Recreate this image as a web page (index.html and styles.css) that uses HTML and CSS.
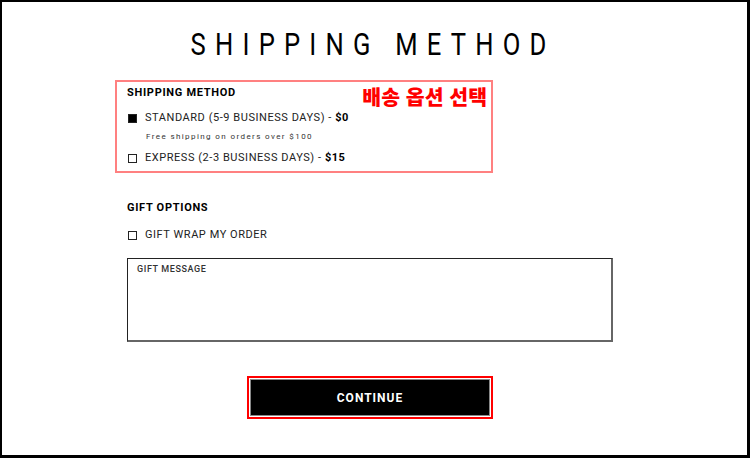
FILE: index.html
```html
<!DOCTYPE html>
<html lang="ko">

<head>
  <meta charset="UTF-8">
  <meta name="viewport" content="width=device-width, initial-scale=1.0">
  <title>Shipping Method</title>
  <link rel="stylesheet" href="styles.css">
</head>

<body>
  <div class="checkout">
    <h1 class="page-title"><span>SHIPPING METHOD</span></h1>

    <!-- shipping options, boxed with the annotation -->
    <div class="shipping-box">
      <span class="note">배송 옵션 선택</span>
      <h2 class="section-title">SHIPPING METHOD</h2>
      <div class="option">
        <span class="check checked"></span>
        <span>STANDARD (5-9 BUSINESS DAYS) - <b>$0</b></span>
      </div>
      <p class="hint">Free shipping on orders over $100</p>
      <div class="option">
        <span class="check"></span>
        <span>EXPRESS (2-3 BUSINESS DAYS) - <b>$15</b></span>
      </div>
    </div>

    <h2 class="section-title gift-title">GIFT OPTIONS</h2>
    <div class="option">
      <span class="check"></span>
      <span>GIFT WRAP MY ORDER</span>
    </div>

    <div class="message-box">GIFT MESSAGE</div>

    <div class="button-wrap">
      <button class="continue-button">CONTINUE</button>
    </div>
  </div>
</body>

</html>
```

FILE: styles.css
```css
* {
  box-sizing: border-box;
}

html,
body {
  margin: 0;
  padding: 0;
}

body {
  height: 100vh;
  border-style: solid;
  border-color: #000;
  border-width: 2px 3px 3px 2px;
  background-color: #FFFFFF;
  font-family: Roboto, "Liberation Sans", Arial, sans-serif;
  color: #111;
  overflow: hidden;
}

.checkout {
  width: 486px;
  margin-left: 125px;
  padding-top: 26px;
}

.page-title {
  margin: 0 0 20px 0;
  padding-right: 6px;
  font-weight: normal;
  font-size: 32px;
  line-height: 32px;
  text-align: center;
  color: #000;
}

.page-title span {
  display: inline-block;
  letter-spacing: 11.5px;
  margin-right: -11.5px;
  transform: scaleX(0.8);
}

.shipping-box {
  position: relative;
  width: 378px;
  margin-left: -12px;
  padding: 4px 10px 6px 10px;
  border: 2px solid #ff8080;
}

/* red annotation label over the box */
.note {
  position: absolute;
  top: 2px;
  right: 4px;
  font-family: "Noto Sans CJK KR", sans-serif;
  font-weight: 900;
  font-size: 20.5px;
  line-height: 24px;
  color: #ff0000;
  text-shadow: 1px 0 0 #fff, -1px 0 0 #fff, 0 1px 0 #fff, 0 -1px 0 #fff;
}

.section-title {
  margin: 0 0 11px 0;
  font-size: 11px;
  line-height: 14px;
  font-weight: bold;
  letter-spacing: 0.7px;
  color: #000;
}

.option {
  display: flex;
  align-items: center;
  gap: 8px;
  font-size: 11px;
  line-height: 14px;
  letter-spacing: 0.55px;
  color: #222;
}

.option b {
  color: #000;
}

.check {
  width: 9px;
  height: 9px;
  margin-left: 1px;
  border: 1px solid #222;
}

.check.checked {
  background-color: #000;
}

.hint {
  margin: 6px 0 8px 19px;
  font-size: 8px;
  line-height: 12px;
  letter-spacing: 1.4px;
  color: #333;
}

.gift-title {
  margin-top: 28px;
  margin-bottom: 13px;
}

.message-box {
  height: 84px;
  margin-top: 16px;
  padding: 5px 9px;
  border: 1px solid #222;
  border-right: 2px solid #666;
  border-bottom: 2px solid #666;
  font-size: 9px;
  font-weight: 500;
  letter-spacing: 0.6px;
  color: #333;
}

.button-wrap {
  width: 246px;
  margin: 34px 0 0 120px;
  padding: 1px;
  border: 2px solid #ff0000;
}

.continue-button {
  display: block;
  width: 100%;
  height: 37px;
  border: 1px solid #888;
  background-color: #000;
  color: #fff;
  font-family: Roboto, "Liberation Sans", sans-serif;
  font-size: 12px;
  font-weight: bold;
  letter-spacing: 1px;
  cursor: pointer;
}
```
